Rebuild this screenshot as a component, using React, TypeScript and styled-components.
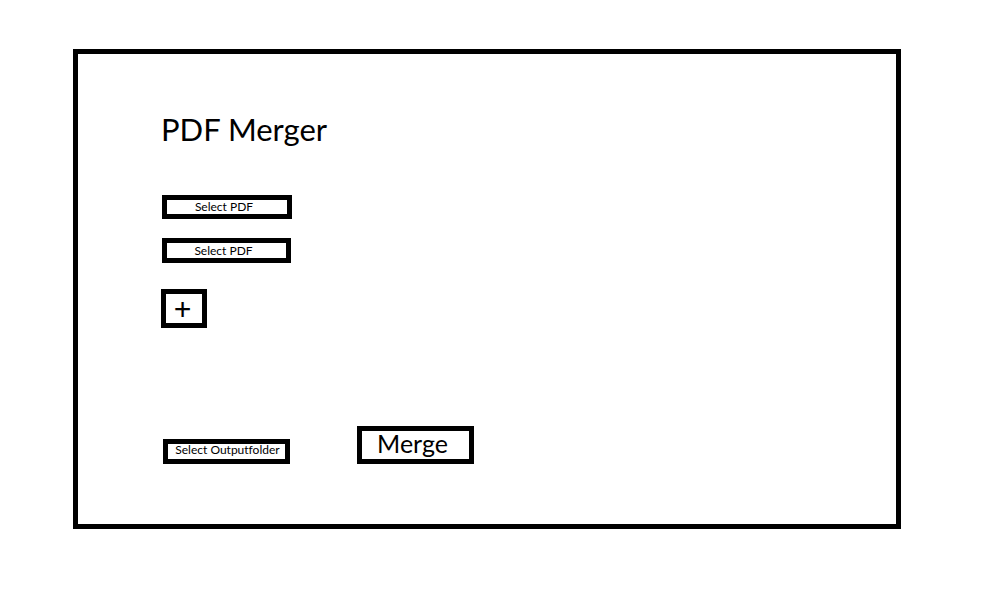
import React from "react";
import styled, { createGlobalStyle } from "styled-components";

const GlobalStyle = createGlobalStyle`
  *, *::before, *::after { box-sizing: border-box; }
  body {
    margin: 0;
    background: #fff;
    color: #000;
    font-family: Lato, "Noto Sans", sans-serif;
    font-variant-ligatures: none;
  }
`;

const Page = styled.div`
  min-height: 100vh;
  padding: 49px 92px 62px 73px;
  display: flex;
`;

const Panel = styled.main`
  flex: 1;
  border: 5px solid #000;
  padding: 56px 83px 60px;
  display: flex;
  flex-direction: column;
  align-items: flex-start;
`;

const Title = styled.h1`
  margin: 0 0 47px;
  font-size: 31px;
  line-height: 38px;
  font-weight: 400;
`;

const FileList = styled.div`
  display: flex;
  flex-direction: column;
  gap: 19px;
  margin: 0 1px 26px;
`;

const Button = styled.button`
  display: flex;
  align-items: center;
  justify-content: center;
  margin: 0;
  padding: 0;
  border: 5px solid #000;
  border-radius: 0;
  background: #fff;
  color: #000;
  font-family: inherit;
  font-variant-ligatures: inherit;
  line-height: 1;
  cursor: pointer;
  white-space: nowrap;
`;

const SelectButton = styled(Button)<{ $width: number; $height: number }>`
  width: ${(p) => p.$width}px;
  height: ${(p) => p.$height}px;
  padding-right: 6px;
  font-size: 12px;
`;

const OutputButton = styled(Button)`
  width: 127px;
  height: 25px;
  padding: 0 0 4px 2px;
  font-size: 12px;
`;

const AddButton = styled(Button)`
  width: 46px;
  height: 39px;
  padding-right: 3px;
  font-family: "Noto Sans", sans-serif;
  font-size: 31px;
`;

const MergeButton = styled(Button)`
  width: 117px;
  height: 38px;
  padding: 0 6px 3px 0;
  font-size: 25px;
`;

const Actions = styled.div`
  display: flex;
  align-items: flex-end;
  gap: 67px;
  margin: auto 2px 0;
`;

export default function App() {
  return (
    <>
      <GlobalStyle />
      <Page>
        <Panel>
          <Title>PDF Merger</Title>
          <FileList>
            <SelectButton type="button" $width={130} $height={24}>Select PDF</SelectButton>
            <SelectButton type="button" $width={129} $height={25}>Select PDF</SelectButton>
          </FileList>
          <AddButton type="button" aria-label="Add PDF">+</AddButton>
          <Actions>
            <OutputButton type="button">Select Outputfolder</OutputButton>
            <MergeButton type="button">Merge</MergeButton>
          </Actions>
        </Panel>
      </Page>
    </>
  );
}
